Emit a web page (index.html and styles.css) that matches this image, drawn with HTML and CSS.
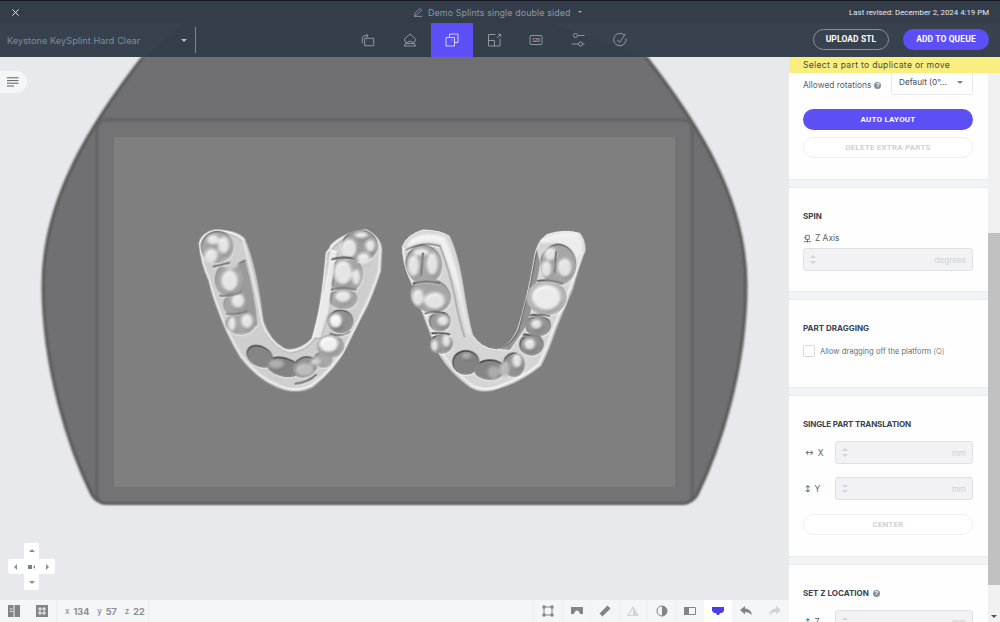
FILE: index.html
```html
<!DOCTYPE html>
<html lang="en">
<head>
<meta charset="utf-8">
<title>Demo Splints single double sided</title>
<link rel="stylesheet" href="styles.css">
</head>
<body>
<div class="app">
  <header class="header">
    <svg class="header-tint" viewBox="0 0 1000 57" aria-hidden="true"><path d="M183 23 L145 57 L645 57 L552 23 Z"/></svg>
    <div class="titlebar">
      <svg class="close" viewBox="0 0 10 10"><path d="M1.5 1.5 L8.5 8.5 M8.5 1.5 L1.5 8.5"/></svg>
      <div class="doc-title">
        <svg class="pencil" viewBox="0 0 10 10"><path d="M1.5 8.5 L2 6.3 L6.8 1.5 L8.6 3.2 L3.8 8 Z M1 9.4 H9"/></svg>
        <span>Demo Splints single double sided</span>
        <i class="caret caret-title"></i>
      </div>
      <div class="revised">Last revised: December 2, 2024 4:19 PM</div>
    </div>
    <div class="toolbar">
      <div class="material"><span>Keystone KeySplint Hard Clear</span><i class="caret"></i></div>
      <nav class="tabs">
        <a class="tab"><svg viewBox="0 0 16 16"><path d="M4.7 6.3 H13.7 V13.7 H4.7 Z M2.3 11.3 V6.5 Q2.3 3.7 5 3.7 H8 M6.4 2 L8.2 3.7 L6.4 5.4"/></svg></a>
        <a class="tab"><svg viewBox="0 0 16 16"><path d="M8 2 L13.8 7.2 L11.8 11.5 H4.2 L2.2 7.2 Z M2 14 L5.5 10 Q8 8.4 10.5 10 L14 14 H2"/></svg></a>
        <a class="tab active"><svg viewBox="0 0 16 16"><path d="M5.5 5 V2 H14 V10.5 H10.5 M2 5.5 H10.5 V14 H2 Z M8 7.5 V8.5"/></svg></a>
        <a class="tab"><svg viewBox="0 0 16 16"><path d="M9.5 2.5 H2.5 V14 H14 V6.5 M2.5 8.5 H8.5 V14 M11 6 L14.5 2.5 M12 2.3 H14.7 V5"/></svg></a>
        <a class="tab"><svg viewBox="0 0 16 16"><rect x="2" y="3.5" width="12" height="9" rx="1"/><text x="8" y="10" class="tab-num">123</text></svg></a>
        <a class="tab"><svg viewBox="0 0 16 16"><circle cx="5.5" cy="3.5" r="2"/><path d="M7.5 3.5 H14.5 M1.5 12 H8.5"/><circle cx="10.5" cy="12" r="2"/><path d="M12.5 12 H14.5"/></svg></a>
        <a class="tab"><svg viewBox="0 0 16 16"><path d="M12.5 3.4 A6.2 6.2 0 1 0 14 6.5 M5.5 8 L7.5 10.5 L13.5 1.8"/></svg></a>
      </nav>
      <div class="actions">
        <button class="btn-ghost">UPLOAD STL</button>
        <button class="btn-primary">ADD TO QUEUE</button>
      </div>
    </div>
  </header>

  <main class="main">
    <section class="viewport">
      <div class="canvas">
        <svg class="scene" viewBox="0 57 789 543" aria-hidden="true">
          <defs>
            <filter id="b1" x="-10%" y="-10%" width="120%" height="120%"><feGaussianBlur stdDeviation="1"/></filter>
            <filter id="b2" x="-20%" y="-20%" width="140%" height="140%"><feGaussianBlur stdDeviation="2"/></filter>
            <filter id="b3" x="-30%" y="-30%" width="160%" height="160%"><feGaussianBlur stdDeviation="5"/></filter>
            <filter id="relief" x="-4%" y="-4%" width="108%" height="108%" color-interpolation-filters="sRGB">
              <feFlood flood-color="#8c8c8c" result="ground"/>
              <feMerge result="solid"><feMergeNode in="ground"/><feMergeNode in="SourceGraphic"/></feMerge>
              <feColorMatrix in="solid" type="matrix" values="0 0 0 0 0  0 0 0 0 0  0 0 0 0 0  1 0 0 0 0" result="h"/>
              <feGaussianBlur in="h" stdDeviation="2" result="hb"/>
              <feDiffuseLighting in="hb" surfaceScale="5.5" diffuseConstant="1.05" lighting-color="#ffffff" result="lit"><feDistantLight azimuth="250" elevation="62"/></feDiffuseLighting>
              <feGaussianBlur in="solid" stdDeviation="1.2" result="albedo"/>
              <feComposite in="lit" in2="albedo" operator="arithmetic" k1=".86" k2=".22" k3="0" k4="0" result="mix"/>
              <feComposite in="mix" in2="SourceAlpha" operator="in"/>
            </filter>
          </defs>
          <path d="M143 57 C90 125 43 200 43 285 C43 370 70 450 92 495 Q97 503 107 503 L682 503 Q692 503 697 495 C719 450 746 370 746 285 C746 200 699 125 646 57 Z" fill="#706f71"/>
          <path d="M143 57 C90 125 43 200 43 285 C43 370 70 450 92 495 Q97 503 107 503 L682 503 Q692 503 697 495 C719 450 746 370 746 285 C746 200 699 125 646 57" fill="none" stroke="#59585b" stroke-width="3" filter="url(#b1)"/>
          <rect x="97" y="120" width="595" height="383" rx="8" fill="#737374" stroke="#5f5e60" stroke-width="2.5" filter="url(#b1)"/>
          <rect x="114" y="137" width="561" height="350" fill="#807f80"/>

          <!-- left splint: grey levels are a height map, lit by the relief filter -->
          <g transform="translate(180 210) scale(.3333)" filter="url(#relief)">
            <path d="M55 100 Q65 65 105 58 Q170 60 195 85 Q215 130 230 200 Q245 270 252 335 Q275 395 310 415 Q355 425 395 385 Q420 320 432 240 Q435 160 450 105 Q490 65 560 58 Q605 80 608 120 L605 185 Q580 260 560 300 Q530 350 505 410 Q470 480 400 535 Q350 560 290 535 Q230 510 180 445 Q140 380 115 310 Q95 260 85 215 Q60 160 55 100 Z" fill="#c2c2c2"/>
            <path d="M60 100 Q70 68 108 62 Q165 66 190 90 Q215 180 240 300 Q248 345 258 365 Q290 415 330 425 Q375 420 400 385 Q425 300 440 130 Q480 72 555 62 Q600 85 602 120 L598 185 Q575 260 550 305 Q525 360 500 405 Q465 478 395 528 Q345 552 295 528 Q235 505 185 440 Q145 375 120 305 Q100 255 90 212 Q65 160 60 100 Z" fill="none" stroke="#dedede" stroke-width="8"/>
            <g filter="url(#b2)">
              <path d="M195 150 Q225 260 232 345 L205 370 L172 300 L140 180 Z" fill="#808080"/>
              <g fill="#8e8e8e">
                <ellipse cx="112" cy="112" rx="48" ry="48"/>
                <ellipse cx="148" cy="210" rx="42" ry="52"/>
                <ellipse cx="165" cy="285" rx="34" ry="34"/>
                <ellipse cx="182" cy="342" rx="44" ry="32"/>
                <ellipse cx="240" cy="440" rx="42" ry="30" fill="#666" transform="rotate(30 240 440)"/>
                <ellipse cx="310" cy="472" rx="50" ry="28" fill="#626262" transform="rotate(15 310 472)"/>
                <ellipse cx="375" cy="472" rx="38" ry="30" fill="#747474" transform="rotate(-25 375 472)"/>
                <ellipse cx="430" cy="450" rx="28" ry="24" fill="#909090"/>
                <ellipse cx="452" cy="410" rx="40" ry="34"/>
                <ellipse cx="482" cy="335" rx="38" ry="35" fill="#727272"/>
                <ellipse cx="490" cy="268" rx="42" ry="30"/>
                <ellipse cx="497" cy="195" rx="52" ry="54"/>
                <ellipse cx="540" cy="108" rx="54" ry="48" fill="#828282"/>
              </g>
              <path d="M425 270 Q445 190 452 120 L472 125 Q458 200 448 300 L422 385 L395 385 Z" fill="#e4e4e4"/>
            </g>
            <g fill="#dedede" filter="url(#b3)">
              <ellipse cx="100" cy="92" rx="18" ry="16"/><ellipse cx="132" cy="108" rx="18" ry="26"/><ellipse cx="95" cy="140" rx="20" ry="22"/>
              <ellipse cx="152" cy="165" rx="26" ry="16" fill="#c0c0c0"/><ellipse cx="150" cy="215" rx="26" ry="32"/>
              <ellipse cx="175" cy="275" rx="20" ry="22"/><ellipse cx="202" cy="336" rx="18" ry="22"/><ellipse cx="157" cy="345" rx="12" ry="22"/>
              <ellipse cx="447" cy="405" rx="30" ry="25" fill="#ececec"/><ellipse cx="468" cy="335" rx="20" ry="22" fill="#f0f0f0"/><ellipse cx="490" cy="262" rx="24" ry="18"/>
              <ellipse cx="490" cy="190" rx="28" ry="36"/><ellipse cx="530" cy="205" rx="13" ry="24"/><ellipse cx="508" cy="118" rx="24" ry="30"/><ellipse cx="552" cy="148" rx="20" ry="18"/><ellipse cx="572" cy="110" rx="15" ry="19"/><ellipse cx="545" cy="78" rx="20" ry="10"/>
              <ellipse cx="375" cy="482" rx="28" ry="20" fill="#ababab"/><ellipse cx="290" cy="465" rx="24" ry="14" fill="#989898"/><ellipse cx="408" cy="458" rx="15" ry="12" fill="#bdbdbd"/>
            </g>
            <path d="M100 172 Q125 165 150 160 M120 258 Q150 262 185 248 M140 312 Q170 318 205 305 M455 150 Q490 140 520 148 M455 240 Q490 232 530 240 M450 372 Q480 385 510 365 M345 523 Q385 520 410 495" fill="none" stroke="#666" stroke-width="4" filter="url(#b1)"/>
          </g>

          <!-- right splint -->
          <g transform="translate(390 210) scale(.3333)" filter="url(#relief)">
            <path d="M35 110 Q50 72 100 58 Q155 60 180 78 Q205 130 220 220 Q235 320 250 375 Q275 415 320 418 Q360 405 380 360 Q410 270 430 150 Q435 100 470 72 Q520 55 570 68 Q590 90 588 125 Q570 170 550 240 Q520 310 500 360 Q480 420 455 470 Q400 515 340 535 Q280 560 240 535 Q180 490 150 440 Q120 380 100 320 Q75 250 50 190 Q35 150 35 110 Z" fill="#cacaca"/>
            <path d="M42 115 Q40 155 60 200 Q90 270 110 320 Q130 385 160 435 Q190 485 245 528 Q285 550 335 528 Q400 505 448 465 Q472 415 492 355 Q515 300 542 235 Q565 170 580 125" fill="none" stroke="#e0e0e0" stroke-width="8"/>
            <path d="M60 95 Q105 62 165 85 Q195 140 212 230 Q228 325 245 385 Q285 425 325 412 L285 415 L235 375 L200 240 L150 105 Q100 90 50 118 Z" fill="#ececec" filter="url(#b3)"/>
            <path d="M445 95 Q505 60 565 72 Q585 95 580 125 L555 170 L540 125 Q505 95 460 105 Z" fill="#e8e8e8" filter="url(#b3)"/>
            <path d="M48 122 Q100 95 150 110 Q178 180 195 260 Q205 320 225 385" fill="none" stroke="#9c9c9c" stroke-width="4" filter="url(#b1)"/>
            <path d="M320 416 Q365 405 385 360 L420 225 L440 120 L450 165 L415 340 L360 420 Z" fill="#777" filter="url(#b2)"/>
            <g filter="url(#b2)">
              <g fill="#8e8e8e">
                <ellipse cx="102" cy="165" rx="54" ry="60" transform="rotate(-14 102 165)"/>
                <ellipse cx="122" cy="258" rx="62" ry="50" transform="rotate(20 122 258)"/>
                <ellipse cx="150" cy="335" rx="32" ry="30" fill="#808080"/>
                <ellipse cx="155" cy="402" rx="34" ry="30" fill="#808080"/>
                <ellipse cx="228" cy="458" rx="40" ry="36" fill="#626262"/>
                <ellipse cx="300" cy="480" rx="46" ry="30" fill="#666"/>
                <ellipse cx="372" cy="465" rx="32" ry="36" fill="#747474"/>
                <ellipse cx="425" cy="405" rx="36" ry="32" fill="#707070"/>
                <ellipse cx="445" cy="348" rx="38" ry="31" fill="#757575"/>
                <ellipse cx="505" cy="165" rx="54" ry="62"/>
                <ellipse cx="470" cy="265" rx="60" ry="52" fill="#a0a0a0"/>
              </g>
            </g>
            <g fill="#dcdcdc" filter="url(#b3)">
              <ellipse cx="72" cy="170" rx="18" ry="32"/><ellipse cx="128" cy="165" rx="18" ry="34"/><ellipse cx="95" cy="130" rx="24" ry="12"/>
              <ellipse cx="85" cy="265" rx="18" ry="26"/><ellipse cx="135" cy="275" rx="32" ry="26"/>
              <ellipse cx="160" cy="335" rx="17" ry="16"/><ellipse cx="170" cy="395" rx="13" ry="20"/><ellipse cx="135" cy="410" rx="11" ry="18"/>
              <ellipse cx="470" cy="265" rx="44" ry="38" fill="#e6e6e6"/><ellipse cx="482" cy="135" rx="19" ry="20"/><ellipse cx="525" cy="175" rx="22" ry="28"/><ellipse cx="470" cy="180" rx="16" ry="24"/>
              <ellipse cx="440" cy="345" rx="17" ry="16"/><ellipse cx="420" cy="405" rx="18" ry="18"/><ellipse cx="382" cy="455" rx="15" ry="22"/><ellipse cx="345" cy="480" rx="15" ry="25" fill="#aaa"/><ellipse cx="312" cy="490" rx="18" ry="20" fill="#959595"/>
              <ellipse cx="230" cy="440" rx="15" ry="10" fill="#939393"/>
            </g>
            <path d="M70 222 Q110 210 150 222 M105 312 Q135 302 165 312 M125 372 Q155 368 180 375 M440 215 Q480 208 520 222 M420 318 Q450 312 480 320 M400 375 Q430 378 455 382 M100 130 L95 200 M500 125 L495 190" fill="none" stroke="#666" stroke-width="4" filter="url(#b1)"/>
          </g>
        </svg>

        <div class="menu-tab"><svg viewBox="0 0 12 10"><path d="M0 .8 H11.5 M0 3.6 H11.5 M0 6.2 H11.5 M0 9 H7"/></svg></div>

        <div class="dpad">
          <div class="dpad-v"><i class="tri tri-up"></i><i class="tri tri-down"></i></div>
          <div class="dpad-h"><i class="tri tri-left"></i><span class="dpad-mid"><b></b><i class="tri tri-left small"></i></span><i class="tri tri-right"></i></div>
        </div>
      </div>

      <footer class="statusbar">
        <div class="st-group st-left">
          <svg class="st-icon" viewBox="0 0 12 12"><path class="fill" d="M0 0 H12 V12 H0 Z"/><path class="cut" d="M6 0 V12 M2 4 H4.5 M2 6.5 H4.5"/></svg>
          <svg class="st-icon" viewBox="0 0 12 12"><path class="fill" d="M0 0 H12 V12 H0 Z"/><path class="cut" d="M4 2 V10 M8 2 V10 M2 4 H10 M2 8 H10"/></svg>
        </div>
        <div class="coords"><small>x</small><span>134</span><small>y</small><span>57</span><small>z</small><span>22</span></div>
        <div class="st-tools">
          <a class="st-tool"><svg viewBox="0 0 12 12"><path class="line" d="M2 2 H10 V10 H2 Z"/><rect class="fill" x=".5" y=".5" width="3" height="3"/><rect class="fill" x="8.5" y=".5" width="3" height="3"/><rect class="fill" x=".5" y="8.5" width="3" height="3"/><rect class="fill" x="8.5" y="8.5" width="3" height="3"/></svg></a>
          <a class="st-tool"><svg viewBox="0 0 12 12"><path class="fill" d="M0 2 H12 V9 H9 Q8 5.5 6 5.5 Q4 5.5 3 9 H0 Z"/></svg></a>
          <a class="st-tool"><svg viewBox="0 0 12 12"><path class="fill" d="M8.5 .5 L11.5 3.5 L3.5 11.5 L.5 8.5 Z"/></svg></a>
          <a class="st-tool dim"><svg viewBox="0 0 12 12"><path class="fill" d="M6 1 L12 11 H0 Z M6 3.5 L2 10 H6 Z"/></svg></a>
          <a class="st-tool"><svg viewBox="0 0 12 12"><circle class="line" cx="6" cy="6" r="5"/><path class="fill" d="M6 1 A5 5 0 0 1 6 11 Z"/></svg></a>
          <a class="st-tool"><svg viewBox="0 0 12 12"><path class="fill" d="M0 2 H5 V10 H0 Z"/><path class="line" d="M5 2.5 H11.5 V9.5 H5"/></svg></a>
          <a class="st-tool on"><svg viewBox="0 0 12 12"><path class="fill" d="M0 2 H12 V6 L10 8 H8 L7 10 H5 L4 8 H2 L0 6 Z"/></svg></a>
          <a class="st-tool"><svg viewBox="0 0 12 12"><path class="fill" d="M0 5 L5 1 V3.5 Q11 4 12 10 Q9 7 5 7 V9.5 Z"/></svg></a>
          <a class="st-tool dim"><svg viewBox="0 0 12 12"><path class="fill" d="M12 5 L7 1 V3.5 Q1 4 0 10 Q3 7 7 7 V9.5 Z"/></svg></a>
        </div>
      </footer>
    </section>

    <aside class="side">
      <div class="notice">Select a part to duplicate or move</div>
      <div class="side-body">
        <div class="panel">
          <section class="card card-layout">
            <div class="rot-row">
              <span class="rot-label">Allowed rotations <i class="help">?</i></span>
              <div class="select"><span>Default (0°...</span><i class="caret caret-dark"></i></div>
            </div>
            <button class="pill pill-primary">AUTO LAYOUT</button>
            <button class="pill pill-off">DELETE EXTRA PARTS</button>
          </section>
          <section class="card card-spin">
            <h3>SPIN</h3>
            <div class="axis-label"><svg viewBox="0 0 10 10"><path d="M1 8.5 H9 M5 6 V9.5 M3 1.5 H7 V6 H3 Z M1 4 H3"/></svg>Z Axis</div>
            <div class="num"><span class="spin"><i class="tri tri-up"></i><i class="tri tri-down"></i></span><span class="unit">degrees</span></div>
          </section>
          <section class="card card-drag">
            <h3>PART DRAGGING</h3>
            <label class="check"><i class="box"></i>Allow dragging off the platform <span class="key">(Q)</span></label>
          </section>
          <section class="card card-trans">
            <h3>SINGLE PART TRANSLATION</h3>
            <div class="axis-row"><span class="axis"><b>↔</b>X</span><div class="num"><span class="spin"><i class="tri tri-up"></i><i class="tri tri-down"></i></span><span class="unit">mm</span></div></div>
            <div class="axis-row"><span class="axis"><b>↕</b>Y</span><div class="num"><span class="spin"><i class="tri tri-up"></i><i class="tri tri-down"></i></span><span class="unit">mm</span></div></div>
            <button class="pill pill-off">CENTER</button>
          </section>
          <section class="card card-z">
            <h3>SET Z LOCATION <i class="help">?</i></h3>
            <div class="axis-row"><span class="axis"><b>↕</b>Z</span><div class="num"><span class="spin"><i class="tri tri-up"></i><i class="tri tri-down"></i></span><span class="unit">mm</span></div></div>
          </section>
        </div>
        <div class="scrollbar"><div class="thumb"></div><i class="tri tri-down sb-arrow"></i></div>
      </div>
    </aside>
  </main>
</div>
</body>
</html>
```
FILE: styles.css
```css
* { box-sizing: border-box; }
html, body { margin: 0; height: 100%; overflow: hidden; }
body { font-family: Inter, "Liberation Sans", sans-serif; color: #3a4350; }
.app { display: flex; flex-direction: column; width: 1000px; height: 622px; overflow: hidden; background: #e8e9ed; }

/* header */
.header { position: relative; flex: 0 0 57px; background: #38424f; border-top: 1px solid #14181e; color: #9aa1aa; }
.header-tint { position: absolute; left: 0; top: -1px; width: 1000px; height: 57px; }
.header-tint path { fill: #353f4c; }
.titlebar { position: relative; height: 22px; display: flex; align-items: center; background: #343e4b; padding: 0 11px; }
.close { width: 9px; height: 9px; fill: none; stroke: #e6e8ea; stroke-width: 1.1; }
.doc-title { display: flex; align-items: center; margin-left: 393px; font-size: 8.9px; letter-spacing: .1px; color: #8f97a1; }
.pencil { width: 10px; height: 10px; margin-right: 5px; fill: none; stroke: #98a0a9; stroke-width: .8; }
.caret { display: block; width: 0; height: 0; border-left: 3px solid transparent; border-right: 3px solid transparent; border-top: 3px solid #b7bcc3; }
.caret-title { margin-left: 7px; border-left-width: 2.5px; border-right-width: 2.5px; border-top: 2.5px solid #a3a9b1; }
.revised { margin-left: auto; font-size: 7.85px; color: #e9ebee; font-family: Roboto, sans-serif; }

.toolbar { position: relative; height: 34px; display: flex; align-items: stretch; }
.material { width: 196px; height: 26px; margin-top: 4px; display: flex; align-items: center; justify-content: space-between; padding: 0 8px 0 7px; border-right: 1px solid #7d858f; font-size: 9.05px; letter-spacing: .1px; color: #828a95; }
.tabs { display: flex; margin-left: 151px; }
.tab { width: 42px; display: flex; align-items: center; justify-content: center; }
.tab svg { width: 16px; height: 16px; fill: none; stroke: #a0a6ae; stroke-width: .85; }
.tab.active { background: #5b4ff5; }
.tab.active svg { stroke: #e9e7ff; }
.tab-num { font: 700 4.6px "Liberation Sans", sans-serif; text-anchor: middle; fill: #a0a6ae; stroke: none; }
.actions { margin-left: auto; display: flex; align-items: center; gap: 14px; padding: 0 11px 2px 0; }
.actions button { height: 21px; border-radius: 11px; font: 700 8.5px Roboto, sans-serif; color: #fff; letter-spacing: .1px; padding: 0; }
.btn-ghost { width: 76px; background: transparent; border: 1px solid #8c939c; }
.btn-primary { width: 86px; background: #5b4ff5; border: 0; }

/* main */
.main { flex: 1; display: flex; min-height: 0; }
.viewport { flex: 0 0 789px; display: flex; flex-direction: column; }
.canvas { position: relative; flex: 1; overflow: hidden; }
.scene { display: block; width: 789px; height: 543px; }
.menu-tab { position: absolute; left: 0; top: 14px; width: 27px; height: 22px; background: #f5f6f7; border-radius: 0 11px 11px 0; display: flex; align-items: center; padding-left: 7px; }
.menu-tab svg { width: 12px; height: 10px; fill: none; stroke: #5b6068; stroke-width: 1; }

.dpad { position: absolute; left: 8px; top: 486px; width: 47px; height: 47px; }
.dpad-v { position: absolute; left: 16px; top: 0; width: 15px; height: 47px; background: #fff; border-radius: 2px; display: flex; flex-direction: column; justify-content: space-between; align-items: center; padding: 6px 0; }
.dpad-h { position: absolute; left: 0; top: 16px; width: 47px; height: 15px; background: #fff; border-radius: 2px; display: flex; justify-content: space-between; align-items: center; padding: 0 6px; }
.dpad-mid { display: flex; align-items: center; gap: 1px; }
.dpad-mid b { display: block; width: 4px; height: 4px; background: #7b7f86; }
.tri { display: block; width: 0; height: 0; border: 3px solid transparent; }
.tri-up { border-top: 0; border-bottom: 3px solid #8a8e95; }
.tri-down { border-bottom: 0; border-top: 3px solid #8a8e95; }
.tri-left { border-left: 0; border-right: 3px solid #8a8e95; }
.tri-right { border-right: 0; border-left: 3px solid #8a8e95; }
.tri.small { border-width: 2px; border-left: 0; border-right-color: #8a8e95; }

.statusbar { flex: 0 0 22px; display: flex; align-items: stretch; background: #f4f5f6; }
.st-group { display: flex; align-items: center; gap: 16px; width: 57px; padding-left: 8px; border-right: 1px solid #ebecee; }
.st-icon { width: 12px; height: 12px; }
.st-icon .fill, .st-tool .fill { fill: #80848b; }
.st-icon .cut { fill: none; stroke: #f4f5f6; stroke-width: 1; }
.coords { width: 92px; padding-left: 8px; display: flex; align-items: center; gap: 4px; font: 700 9px Inter, sans-serif; color: #888c94; border-right: 1px solid #ebecee; }
.coords small { font-size: 8px; font-weight: 500; margin-left: 4px; }
.coords small:first-child { margin-left: 0; }
.st-tools { margin-left: auto; display: flex; }
.st-tool { width: 28.4px; display: flex; align-items: center; justify-content: center; border-left: 1px solid #eeeff1; }
.st-tool svg { width: 12px; height: 12px; }
.st-tool .line { fill: none; stroke: #80848b; stroke-width: 1; }
.st-tool.dim .fill { fill: #d2d3d6; }
.st-tool.on { background: #fff; border-left: 0; }
.st-tool.on .fill { fill: #4d3fe8; }
.st-tool:nth-child(n+8) { border-left: 0; }

/* side panel */
.side { flex: 0 0 211px; display: flex; flex-direction: column; min-height: 0; }
.notice { flex: 0 0 16px; background: #f9ee7f; font-size: 8.6px; letter-spacing: .3px; line-height: 16px; padding-left: 14px; color: #4a4a3d; white-space: nowrap; position: relative; z-index: 2; }
.side-body { flex: 1; display: flex; min-height: 0; }
.panel { width: 199px; height: 549px; overflow: hidden; background: #f3f4f5; }
.card { background: #fefefe; padding: 0 15px 0 14px; border-bottom: 1px solid #e9eaec; border-top: 1px solid #e9eaec; margin-bottom: 7px; }
.card:first-child { border-top: 0; }
.card h3 { margin: 0; font: 700 8px Inter, sans-serif; color: #3a4350; display: flex; align-items: center; gap: 4px; height: 10px; }
.card-layout { height: 107px; }
.rot-row { display: flex; justify-content: space-between; height: 22px; }
.rot-label { display: flex; align-items: center; gap: 3px; font-size: 8.4px; color: #5a606a; height: 24px; }
.help { display: inline-flex; width: 7px; height: 7px; border-radius: 50%; background: #8a8e95; color: #fff; font: 700 6px/7px "Liberation Sans", sans-serif; justify-content: center; font-style: normal; }
.select { width: 82px; height: 22px; background: #fff; border: 1px solid #e8e9ec; border-top: 0; border-radius: 0 0 2px 2px; display: flex; align-items: center; justify-content: space-between; padding: 0 9px 3px 7px; font-size: 8.2px; color: #454c57; }
.caret-dark { border-top-color: #7b7f86; }
.pill { display: block; width: 170px; height: 21px; border-radius: 11px; font: 700 8px Roboto, sans-serif; letter-spacing: .2px; padding: 0; }
.pill-primary { margin-top: 14px; background: #5b4ff5; color: #fff; border: 0; }
.pill-off { background: #fff; color: #d0d2d6; border: 1px solid #eeeff1; }
.card-layout .pill-off { margin-top: 7px; }
.card-spin { height: 105px; padding-top: 23px; }
.axis-label { display: flex; align-items: center; gap: 3px; margin-top: 12px; font-size: 8.4px; color: #5a606a; }
.axis-label svg { width: 9px; height: 9px; fill: none; stroke: #5a606a; stroke-width: .9; }
.num { flex: 1; height: 23px; background: #f2f2f5; border: 1px solid #e0e1e6; border-radius: 3px; display: flex; align-items: center; justify-content: space-between; padding: 0 6px; }
.card-spin .num { margin-top: 5px; }
.spin { display: flex; flex-direction: column; gap: 3px; }
.spin .tri-up { border-bottom-color: #d4d5da; }
.spin .tri-down { border-top-color: #d4d5da; }
.unit { font-size: 8.2px; color: #d0d1d6; }
.card-drag { height: 89px; padding-top: 23px; }
.check { display: flex; align-items: center; margin-top: 12px; font-size: 7.6px; color: #6a7079; white-space: nowrap; }
.box { width: 12px; height: 12px; border: 1px solid #d6d7dc; border-radius: 2px; background: #fff; margin-right: 5px; }
.key { color: #8f939a; margin-left: 2px; }
.card-trans { height: 162px; padding-top: 23px; }
.card-trans h3 { letter-spacing: -.15px; }
.axis-row { display: flex; align-items: center; margin-top: 13px; }
.axis { width: 32px; font-size: 8.6px; color: #5a606a; display: flex; align-items: center; gap: 4px; padding-left: 2px; }
.axis b { font-size: 6.5px; font-weight: 700; }
.card-trans .pill-off { margin-top: 14px; }
.card-trans h3 + .axis-row { margin-top: 12px; }
.card-z { height: 100px; padding-top: 23px; border-bottom: 0; }
.card-z .axis-row { margin-top: 12px; }
.scrollbar { position: relative; width: 12px; background: #f1f1f1; padding-top: 160px; }
.thumb { width: 12px; height: 352px; background: #c1c1c1; }
.sb-arrow { position: absolute; left: 3px; bottom: 4px; }
.sb-arrow.tri-down { border-top-color: #505050; }
```
